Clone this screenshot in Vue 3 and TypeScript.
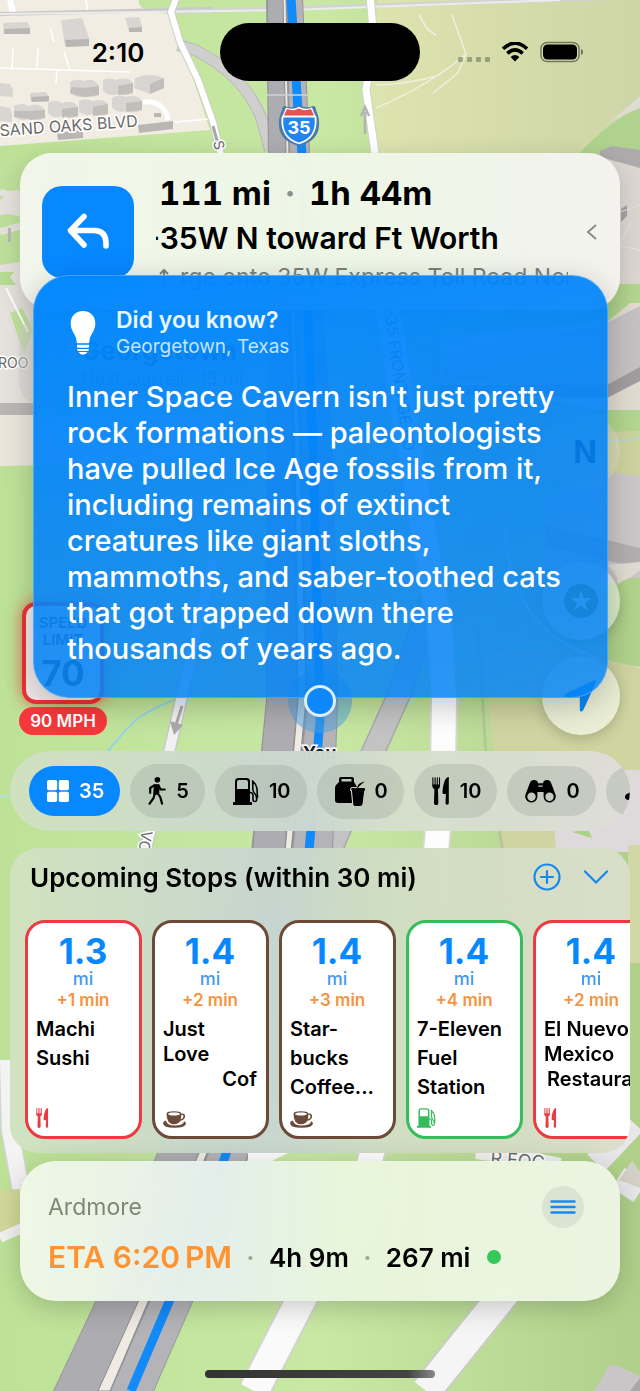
<script setup lang="ts">
interface Chip { icon: string; label: string; count: string; w: number; h: number; active?: boolean }
interface Stop {
  id: number
  dist: string
  detour: string
  lines: string[]
  icon: string
  kind: 'food' | 'coffee' | 'fuel'
  w: number
  h: number
  tight?: 'end' | 'shift'
}

const chips: Chip[] = [
  { icon: 'grid', label: 'All stops', count: '35', w: 22, h: 22, active: true },
  { icon: 'walk', label: 'Rest areas', count: '5', w: 18, h: 28 },
  { icon: 'fuel', label: 'Fuel', count: '10', w: 26, h: 27 },
  { icon: 'takeout', label: 'Takeout', count: '0', w: 30, h: 29 },
  { icon: 'fork', label: 'Restaurants', count: '10', w: 18, h: 28 },
  { icon: 'binoculars', label: 'Sights', count: '0', w: 31, h: 23 },
  { icon: 'bed', label: 'Lodging', count: '4', w: 30, h: 23 },
]

const stops: Stop[] = [
  { id: 1, dist: '1.3', detour: '+1 min', lines: ['Machi', 'Sushi'], icon: 'fork', kind: 'food', w: 13, h: 20 },
  { id: 2, dist: '1.4', detour: '+2 min', lines: ['Just', 'Love', 'Cof'], icon: 'coffee', kind: 'coffee', w: 23, h: 17, tight: 'end' },
  { id: 3, dist: '1.4', detour: '+3 min', lines: ['Star-', 'bucks', 'Coffee...'], icon: 'coffee', kind: 'coffee', w: 23, h: 17 },
  { id: 4, dist: '1.4', detour: '+4 min', lines: ['7-Eleven', 'Fuel', 'Station'], icon: 'fuel', kind: 'fuel', w: 19, h: 20 },
  { id: 5, dist: '1.4', detour: '+2 min', lines: ['El Nuevo', 'Mexico', 'Restaurant'], icon: 'fork', kind: 'food', w: 13, h: 20, tight: 'shift' },
]
</script>

<template>
  <div class="screen">
    <svg class="symbols" aria-hidden="true">
      <symbol id="grid" viewBox="0 0 22 22">
        <rect width="10.2" height="10.2" rx="1.8" /><rect x="11.8" width="10.2" height="10.2" rx="1.8" />
        <rect y="11.8" width="10.2" height="10.2" rx="1.8" /><rect x="11.8" y="11.8" width="10.2" height="10.2" rx="1.8" />
      </symbol>
      <symbol id="walk" viewBox="0 0 18 28">
        <circle cx="9.4" cy="2.8" r="2.8" />
        <path d="M7 8.5h3.4l-.4 8H6.4z" stroke="currentColor" stroke-width="2.4" stroke-linejoin="round" />
        <path d="M6.5 8.2 2.2 11v5M10.5 8.5l2.2 4h4M7 16l-1.4 5-4 5.6M9.6 16l2.8 4.4 1.6 6.2" fill="none" stroke="currentColor" stroke-width="2.2" stroke-linecap="round" stroke-linejoin="round" />
      </symbol>
      <symbol id="fuel" viewBox="0 0 26 27">
        <path fill-rule="evenodd" d="M2 3.500Q2 0 5.500 0h8Q17 0 17 3.500V24h1.200q.8 0 .8.800V27H0v-2.200Q0 24 .8 24H2zM4 4v7h11V4Q15 2 13 2H6Q4 2 4 4z" />
        <path d="M17 14.500q3 0 3 3v4q0 2 1.800 2t1.900-2c0-3-.7-5-2.300-6.500-1.200-1.200-1.600-3-1.600-4.600V3M19.500 3c2.800 2.500 4.600 5 4.600 9.500l.4 7" fill="none" stroke="currentColor" stroke-width="1.600" stroke-linecap="round" />
      </symbol>
      <symbol id="takeout" viewBox="0 0 30 29">
        <path fill-rule="evenodd" d="M4 5V2Q4 0 6 0h11q2 0 2 2v3l3 5h-6l2 16H3q-3 0-3-3V11q0-1.500 1-3zM6.500 4.500h10V2.800Q16.500 2 15.700 2H7.300q-.8 0-.8.800z" />
        <path d="M16.800 11.600h12.400q.8 0 .8.900t-.8.900h-.5L27 27q-.2 1.500-1.500 1.500H20q-1.300 0-1.500-1.500l-1.600-13.600q-.9 0-.9-.9t.8-.9zM22.500 11l1.400-3.600L28.800 5" stroke="currentColor" stroke-width="1" />
        <path d="M15.700 11v2.500h.7l1.400 14" fill="none" stroke="#cbd4ca" stroke-width="1.100" />
      </symbol>
      <symbol id="fork" viewBox="0 0 18 28">
        <path d="M.9.700v8.200q0 2.300 2.100 3L2.600 26q0 1.600 1.600 1.600T5.800 26l-.4-14.100q2.100-.7 2.100-3V.7M3.100.700V9M5.300.700V9" stroke="currentColor" stroke-width="1.100" stroke-linecap="round" fill="none" />
        <path d="M3 10.500h2.400L5.900 26q0 1.600-1.700 1.600T2.500 26zM.5 7.500h7.400q.2 4-3.700 4.400Q.2 11.500.5 7.500z" />
        <path d="M16.800 0v26q0 1.700-1.700 1.700T13.500 26l.4-9h-2.200q-1.300 0-1.200-1.500C10.900 8 12.500 2 15.600.2z" />
      </symbol>
      <symbol id="binoculars" viewBox="0 0 31 23">
        <path fill-rule="evenodd" d="M13.200 3.200h4.600Q18.800 0 22 0q3 0 4.200 3.200l4 10.600A6.100 6.100 0 1 1 18.600 17v-5h-6.200v5A6.100 6.100 0 1 1 .8 13.800L4.800 3.200Q6 0 9 0q3.200 0 4.200 3.200zM6.500 12.500a4.200 4.200 0 1 0 0 8.400 4.200 4.200 0 0 0 0-8.400zm18 0a4.200 4.200 0 1 0 0 8.400 4.200 4.200 0 0 0 0-8.400zM13.300 5.500v1.300h4.400V5.500z" />
      </symbol>
      <symbol id="bed" viewBox="0 0 30 23"><path d="M1 17Q1 14 5 13l6-3h15q4 0 4 5v5H5q-4 0-4-3z" /></symbol>
      <symbol id="coffee" viewBox="0 0 23 17">
        <path fill-rule="evenodd" d="M3.500 2.500Q4 .3 11 .3t7.300 2.200h1.200q2.800.3 2.600 3-.3 3.500-4.700 4.300-1.700 3.400-6.400 3.400Q3.500 13.200 3.500 2.500zM11 1.500C7 1.500 5 2.200 5 3s2 1.600 6 1.600S17 3.800 17 3s-2-1.500-6-1.500zm7.300 2.300q0 2.500-.5 4.500 2.500-.6 2.700-2.800.1-1.600-1.400-1.700z" />
        <path d="M2.800 9.500Q0 10.300 0 12.200q.3 4.500 11.500 4.600Q22.700 16.700 23 12.500q0-1.400-1.800-2.200-1 4.300-10 4.300-6.800 0-8.400-5.100z" />
      </symbol>
    </svg>

    <svg class="map" viewBox="0 0 640 1391" preserveAspectRatio="xMidYMid slice" aria-hidden="true">
      <defs>
        <linearGradient id="grass" x1="0" y1="0" x2="1" y2="0">
          <stop offset="0" stop-color="#bde297" /><stop offset=".5" stop-color="#c8e8a4" /><stop offset="1" stop-color="#b0d08a" />
        </linearGradient>
        <linearGradient id="field" x1="0" y1="0" x2="1" y2="0">
          <stop offset="0" stop-color="#dde4ae" /><stop offset="1" stop-color="#ced5a7" />
        </linearGradient>
      </defs>
      <rect width="640" height="1391" fill="url(#grass)" />
      <path d="M378 0H640V153H372L366 90z" fill="url(#field)" />
      <path d="M580 153Q610 120 640 108V153z" fill="#afd38f" /><path d="M602 128Q622 112 640 96V108Q616 117 602 128z" fill="#dedad4" />
      <path d="M0 0H139Q136 12 172 14L210 130 0 146z" fill="#f1ede3" />
      <path d="M0 160 40 175V470L0 465z" fill="#e5e1dc" />
      <path d="M0 160 30 160V195Q10 190 0 200zM0 215 20 213V262L0 265zM0 215 14 218 20 240 0 243zM10 313 22 308 33 330 24 354z" fill="#bfe19c" />
      <path d="M0 192Q14 197 20 192M0 208 20 213M0 232 20 226" stroke="#e6e3de" stroke-width="7" fill="none" /><path d="M8 228h3v14H8z" fill="#bab7b4" />
      <path d="M0 272h14l-4 5 6 8H0z" fill="#b8dd93" />
      <path d="M6 288 28 332" stroke="#fff" stroke-width="2" />
      <path d="M0 403H36V415H0z" fill="#b9b7b6" /><path d="M0 415H220V462L0 466z" fill="#eae6dc" /><path d="M0 466 220 462V490H0z" fill="#bde297" />

      <!-- buildings and lots -->
      <g stroke="#fff" stroke-width="1.500" fill="none">
        <path d="M13 48 12 70M38 48 37 70M50 28 54 42M64 52 70 70M86 0 88 12M57 70 56 84M0 68 130 72M174 122 210 119" />
        <path d="M10 0 14 16" stroke-width="6" /><path d="M143 102Q164 100 168 120" stroke-width="5" />
      </g>
      <path d="M0 14 213 9" stroke="#c9c9cb" stroke-width="4" /><path d="M170 12 640 -3" stroke="#d2d3d4" stroke-width="4" /><path d="M0 14 290 10 560 0" stroke="#ececed" stroke-width="2" fill="none" />
      <g fill="#d9d5d2">
        <path d="M3 23 28 22 30 28V34H4zM61 20 82 18 89 38V46H65zM125 18 139 17 142 26V32L129 31z" />
        <path d="M30 93 46 92 49 97V102H31z" />
        <path d="M70 82Q76 78 84 81 94 77 99 86V95Q92 98 84 97 76 98 70 93z" />
        <path d="M103 80Q108 77 117 80 127 76 133 83V93Q126 97 118 94 110 97 103 91zM135 78Q150 72 164 78V88L150 94 134 88zM112 98Q118 94 126 97 137 93 142 101V110Q134 114 126 111 118 114 112 107zM79 101Q86 98 93 101 103 98 108 104V114Q100 117 93 114 86 117 79 112zM48 103Q55 99 62 103 73 99 78 107V116Q72 120 62 116 54 120 48 113zM14 106Q22 102 29 106 39 102 45 110V118Q37 122 29 119 20 122 14 116zM0 83 10 84 13 90V97L0 96zM0 106 10 108 12 114V122L0 121z" />
      </g>
      <g fill="#b9b6b4">
        <path d="M4 29 30 28V34H4zM65 40 89 39V46L66 47zM129 28 142 27V32L129 32zM31 97 49 96V101L32 102zM138 125 173 121V129L139 133zM57 133 83 130V138L58 140zM154 113h7v4h-7z" />
        <path d="M84 88 99 86V95L84 97zM118 86 133 83V93L118 95zM150 84 164 78V88L150 94zM126 103 142 101V110L126 112zM93 107 108 104V114L93 116zM62 109 78 107V116L62 118zM29 111 45 110V118L29 120zM72 87 84 88V97L70 93zM14 111 29 111V119L14 117z" opacity=".75" />
      </g>
      <path d="M178 45 195 50Q245 75 262 120L270 150" stroke="#b8b9b9" stroke-width="12" fill="none" /><path d="M178 45 195 50Q245 75 262 120L270 150" stroke="#cfd0ce" stroke-width="10" fill="none" />
      <path d="M177 -4 171 12 180 42 198 80 213 122 221 155" stroke="#cdd0cb" stroke-width="8" fill="none" /><path d="M177 -4 171 12 180 42 198 80 213 122 221 155" stroke="#fff" stroke-width="6" fill="none" />
      <path d="M213 126 218 144" stroke="#a7a7a7" stroke-width="3" />

      <!-- right side -->
      <path d="M600 151 612 146 640 150V185H600z" fill="#aeabad" /><path d="M604 158 640 168V284H604z" fill="#dcd7d1" />
      <path d="M621 209 627 205V216L621 222z" fill="#a6a3a5" /><path d="M620 212 640 205M620 246 640 250M620 242 632 222" stroke="#e8e4df" fill="none" />
      <path d="M430 340 604 284H640V480L430 470z" fill="#b2d58f" />
      <path d="M440 335 607 322 630 303 640 303V410L600 410 440 380z" fill="#e0dacf" />
      <path d="M450 355 607 323 640 306V374L607 390 440 380z" fill="#c5c1c2" /><path d="M440 385 607 385 640 367V381L607 398 440 394z" fill="#a09d9f" />
      <path d="M490 460Q580 430 640 431V480H470z" fill="#ccd39e" /><path d="M600 441Q620 442 640 438" stroke="#acd6dc" stroke-width="1.500" fill="none" />
      <path d="M545 500 607 472 640 476V580L607 585 545 575z" fill="#cbc7c9" /><path d="M545 525 640 548V568L545 546z" fill="#b3afb1" />
      <path d="M607 565Q625 580 612 592L640 570V562z" fill="#e0dbd2" /><path d="M612 590Q625 575 640 578V668Q560 655 520 600L505 560z" fill="#b0d28c" />
      <path d="M505 530Q510 650 640 668" stroke="#e1e6d7" stroke-width="2" fill="none" />
      <path d="M484 655Q560 645 640 668V775L550 782 494 760z" fill="#cfd4a1" />
      <path d="M494 740 640 725V852H500z" fill="#cfd4a0" /><path d="M550 770H640V852H556z" fill="#dedadb" /><path d="M572 832 588 829 592 838z" fill="#abd185" />
      <path d="M628 845H640V963H628z" fill="#d2d8a5" />

      <!-- local roads -->
      <g fill="none">
        <path d="M375 153 366 90 374 40 370 -4" stroke="#d1d4cc" stroke-width="9" /><path d="M375 153 366 90 374 40 370 -4" stroke="#fff" stroke-width="7" />
        <path d="M365 134V112M361 116 365 107 369 116" stroke="#b3b4b1" stroke-width="2.500" />
        <path d="M419 15 428 30 436 35M452 15 466 54 458 73 433 93M466 54Q430 85 376 108M440 75Q410 84 376 85" stroke="#eef0de" stroke-width="1.500" />
        <path d="M107 752Q125 730 138 718 160 704 180 698L240 650" stroke="#97d4e6" stroke-width="2" />
        <path d="M0 797 14 794" stroke="#b1e1dc" stroke-width="2" />
        <path d="M213 560 181 700 165 770 145 852" stroke="#c7c9c5" stroke-width="13" /><path d="M213 560 181 700 165 770 145 852" stroke="#f1f1f1" stroke-width="10" />
        <path d="M182 706 176 725" stroke="#aaa" stroke-width="3" /><path d="M170 721 174 735 183 725z" fill="#aaa" />
        <path d="M438 580 401 690 365 770 330 852" stroke="#a9aaab" stroke-width="24" /><path d="M438 580 401 690 365 770 330 852" stroke="#c3c3c4" stroke-width="21" />
        <path d="M383 280 405 420 440 630 444 700 443 770 436 852V900L350 1240" stroke="#d4d7cf" stroke-width="28" /><path d="M383 280 405 420 440 630 444 700 443 770 436 852V900L350 1240" stroke="#fdfdfd" stroke-width="24" />
        <path d="M478 630 486 755 503 852" stroke="#b4c799" stroke-width="3" />
      </g>

      <!-- interstate -->
      <path d="M266 -2H303L310 153 333 450 338 700 333 852 250 1153 193 1302 154 1391H53L95 1302 157 1153 251 852 266 700 268 153z" fill="#97979b" />
      <path d="M268 -2H283L286 153 292 450 297 700 284 852 198 1153 138 1302 98 1391H54L96 1302 158 1153 253 852 267 700 269 153z" fill="#acacb1" />
      <path d="M283 -2H286L289 153 300 450 306 700 291 852 207 1153 148 1302 110 1391H98L138 1302 199 1153 285 852 298 700 295 450 286 153z" fill="#efebe2" stroke="#8d8d91" stroke-width="1" />
      <path d="M288 -2H302L309 153 332 450 337 700 332 852 248 1153 192 1302 153 1391H111L150 1302 209 1153 293 852 308 700 302 450 290 153z" fill="#b4b4b8" />
      <path d="M291 -2 298 110 302 153 313 450 320 720 309 852 225 1157 169 1302 131 1391" stroke="#138af9" stroke-width="9" fill="none" stroke-linejoin="round" />
      <path d="M267 95H308" stroke="#d2d2d3" stroke-width="1.500" />
      <circle cx="320" cy="701" r="32" fill="#4d9fe0" opacity=".5" />

      <!-- lower map -->
      <g fill="none">
        <path d="M8 1060 10 1130 30 1240" stroke="#d4d5d3" stroke-width="19" /><path d="M8 1060 10 1130 30 1240" stroke="#f3f3f3" stroke-width="16" />
        <path d="M0 1190 20 1189V1228L0 1234z" fill="#d3d99b" /><path d="M0 1238 26 1226" stroke="#f3f3f3" stroke-width="10" />
        <path d="M248 1163V1152H290L268 1163z" fill="#fbfbfb" />
        <path d="M306 1290 254 1391" stroke="#d0d4cb" stroke-width="33" /><path d="M306 1290 254 1391" stroke="#fafafa" stroke-width="29" />
        <path d="M512 1284 426 1391" stroke="#c9cec2" stroke-width="33" /><path d="M512 1284 426 1391" stroke="#f6f5f6" stroke-width="29" />
        <path d="M476 1152Q540 1160 560 1165" stroke="#f1f1f1" stroke-width="14" />
        <path d="M596 1163 634 1123M618 1178 640 1192" stroke="#e8e7e9" stroke-width="24" /><path d="M632 1161 619 1180 640 1188V1172z" fill="#d5d1c7" />
      </g>
      <path d="M609 1366Q613 1362 620 1367L640 1376V1391H594z" fill="#c8c6c6" /><path d="M640 1378 630 1391H640z" fill="#aaa7a7" />

      <g class="labels">
        <text transform="translate(-12 137) rotate(-4)" font-size="16">USAND OAKS BLVD</text>
        <text transform="translate(213 142) rotate(75)" font-size="14">S</text>
        <text x="-2" y="368" font-size="14">ROO</text>
        <text transform="translate(384 310) rotate(82)" font-size="16">-35 FRONTAGE RD</text>
        <text transform="translate(142 830) rotate(100)" font-size="15">VO</text>
        <text transform="translate(490 1164) rotate(5)" font-size="18">R EOG</text>
        <text x="303" y="759" font-size="18" class="you">You</text>
      </g>

      <g transform="translate(279 105)">
        <path d="M6 1Q13 4 20 0q7 4 14 1 3 0 3 4 4 9 3 16-1 15-20 20Q1 36 0 21-1 14 3 5 3 1 6 1z" fill="#4d7ba9" />
        <path d="M7 2.500Q14 5.500 20 1.800q6 3.700 13 .7 2 6 4.500 10Q39 34 20 39.200 1 34 2.500 12.500 5 8 7 2.500z" fill="#fff" />
        <path d="M8 4Q14 6.500 20 3.500q6 3 12 .5l3 6.500H5z" fill="#e9504f" />
        <path d="M4.500 12.500h31Q38 32 20 37.500 2 32 4.500 12.500z" fill="#2484f0" />
        <text x="20" y="28.500" text-anchor="middle" font-size="18" class="route-no">35</text>
      </g>
    </svg>

    <header class="status">
      <time class="clock">2:10</time>
      <span class="island"></span>
      <span class="signals">
        <span class="dots"><i></i><i></i><i></i><i></i></span>
        <svg width="26" height="20" viewBox="0 0 26 20" aria-label="Wi-Fi">
          <path d="M1 6.800Q13-4.500 25 6.800M5.300 11.400Q13 4.500 20.700 11.400" fill="none" stroke="#000" stroke-width="3.600" />
          <path d="M8.600 15Q13 11 17.400 15L13 19.600z" />
        </svg>
        <svg width="44" height="22" viewBox="0 0 44 22" aria-label="Battery">
          <rect x="1" y="1.500" width="38" height="19" rx="6" fill="none" stroke="#000" stroke-opacity=".45" stroke-width="1.500" />
          <rect x="3" y="3.500" width="34" height="15" rx="4.500" /><path d="M41 8Q43 8.500 43 11t-2 3z" opacity=".5" />
        </svg>
      </span>
    </header>

    <main class="guidance">
      <section class="turn">
        <div class="turn-icon">
          <svg width="44" height="38" viewBox="0 0 44 38" aria-label="Turn left"><path d="M18 3.500 4.500 17.500 18 32M5.500 17.500H28Q40 17.500 40 30.500V33" fill="none" stroke="#fff" stroke-width="5.600" stroke-linecap="round" stroke-linejoin="round" /></svg>
        </div>
        <div class="turn-text">
          <p class="turn-dist">111 mi<span class="sep">·</span>1h 44m</p>
          <p class="turn-road"><span>-35W N toward Ft Worth</span></p>
          <p class="turn-next"><svg width="12" height="20" viewBox="0 0 12 20"><path d="M6 19V4M2 7l4-4 4 4" fill="none" stroke="#7c8177" stroke-width="2" /></svg><span>rge onto 35W Express Toll Road North</span></p>
        </div>
        <button class="collapse" aria-label="Collapse directions"><svg width="12" height="18" viewBox="0 0 12 18"><path d="M10 2 2 9l8 7" fill="none" stroke="#858585" stroke-width="1.800" /></svg></button>
      </section>

      <div class="map-zone">
        <div class="left-rail">
          <div class="place"><b>Georgetown</b><span>Next: Jarrell · 13 mi</span></div>
          <div class="speed">
            <div class="limit"><small>SPEED<br>LIMIT</small><strong>70</strong></div>
            <div class="mph">90 MPH</div>
          </div>
        </div>
        <div class="right-rail">
          <button class="round compass" aria-label="Compass">N</button>
          <button class="round" aria-label="Favorites">
            <svg width="36" height="36" viewBox="0 0 36 36"><circle cx="18" cy="18" r="17" fill="#72882e" /><path d="m18 7.500 2.600 7.400 7.900.2-6.300 4.700 2.300 7.500-6.500-4.500-6.500 4.500 2.300-7.500-6.300-4.700 7.900-.2z" fill="#f0f4dd" /></svg>
          </button>
          <button class="round" aria-label="My location">
            <svg width="34" height="34" viewBox="0 0 34 34"><path d="M1.500 14.800 30 1.300q2.800-.9 2 2L19.200 31.200q-1.200 2-2.700 1-.7-.5-.7-1.500V18.500H3Q.5 18 .3 16.500q0-1 1.200-1.700z" fill="#0788ff" /></svg>
          </button>
        </div>
      </div>

      <article class="tip">
        <header class="tip-head">
          <svg width="26" height="44" viewBox="0 0 26 44"><path d="M13 0C5 0 .7 5.600.7 12.500c0 8.500 5.700 10.500 5.900 18 .1 1.500.6 1.800 1.700 1.800h9.400c1.100 0 1.600-.3 1.700-1.800.2-7.500 5.900-9.500 5.900-18C25.300 5.600 21 0 13 0zM7 33.800h12v1.900q0 1-1 1H8q-1 0-1-1zM7 38h12q0 2-2 2H9q-2 0-2-2zM8.500 41h9q-1.500 2.800-4.500 2.800T8.500 41z" fill="#fff" /></svg>
          <div><h2>Did you know?</h2><p>Georgetown, Texas</p></div>
        </header>
        <p class="tip-body">Inner Space Cavern isn't just pretty<br>rock formations — paleontologists<br>have pulled Ice Age fossils from it,<br>including remains of extinct<br>creatures like giant sloths,<br>mammoths, and saber-toothed cats<br>that got trapped down there<br>thousands of years ago.</p>
      </article>
      <span class="puck"></span>
    </main>

    <nav class="chips" aria-label="Stop categories">
      <button v-for="c in chips" :key="c.icon" class="chip" :class="{ active: c.active }" :aria-label="c.label">
        <svg :width="c.w" :height="c.h"><use :href="'#' + c.icon" /></svg><span>{{ c.count }}</span>
      </button>
    </nav>

    <section class="stops">
      <header class="stops-head">
        <h2>Upcoming Stops (within 30 mi)</h2>
        <button aria-label="Add stop"><svg width="28" height="28" viewBox="0 0 28 28"><circle cx="14" cy="14" r="12.500" /><path d="M14 8v12M8 14h12" /></svg></button>
        <button aria-label="Collapse stops"><svg width="26" height="16" viewBox="0 0 26 16"><path d="m2 2.500 11 11 11-11" /></svg></button>
      </header>
      <div class="cards">
        <article v-for="s in stops" :key="s.id" class="card" :class="[s.kind, s.tight && 'tight', s.tight]">
          <strong>{{ s.dist }}</strong>
          <span class="unit">mi</span>
          <span class="detour">{{ s.detour }}</span>
          <div class="name"><span v-for="l in s.lines" :key="l">{{ l }}</span></div>
          <svg class="card-icon" :width="s.w" :height="s.h"><use :href="'#' + s.icon" /></svg>
        </article>
      </div>
    </section>

    <footer class="trip">
      <div class="trip-top">
        <span>Ardmore</span>
        <button aria-label="Trip menu"><svg width="26" height="16" viewBox="0 0 26 16"><path d="M1.500 2.500h23M1.500 8h23M1.500 13.500h23" fill="none" stroke="#188aef" stroke-width="2.400" stroke-linecap="round" /></svg></button>
      </div>
      <div class="trip-row">
        <b>ETA 6:20&#8201;PM</b><i>·</i><span>4h 9m</span><i>·</i><span>267 mi</span><em></em>
      </div>
    </footer>
    <div class="home"><span></span></div>
  </div>
</template>

<style>
body { margin: 0; }
</style>

<style scoped>
* { box-sizing: border-box; }
.screen { position: relative; min-height: 100vh; display: flex; flex-direction: column; overflow: hidden; font-family: Inter, "Liberation Sans", sans-serif; color: #000; background: #bfe19c; }
.screen > * { position: relative; }
h2, p { margin: 0; }
button { border: 0; padding: 0; background: none; font: inherit; color: inherit; display: flex; align-items: center; justify-content: center; flex: none; }
svg { display: block; flex: none; }
.screen > .symbols { position: absolute; width: 0; height: 0; }
.screen > .map { position: absolute; inset: 0; width: 100%; height: 100%; }
.labels text { fill: #6b6b6b; stroke: #fff; stroke-width: 3; paint-order: stroke; font-weight: 400; }
.labels .you { fill: #222; font-weight: 700; }
.route-no { fill: #fff; font-weight: 700; }

.status { display: grid; grid-template-columns: 1fr 200px 1fr; align-items: center; height: 104px; margin-bottom: 49px; }
.clock { text-align: center; padding-left: 16px; font-size: 26px; font-weight: 600; }
.island { height: 58px; border-radius: 29px; background: #000; }
.signals { display: flex; align-items: center; gap: 12px; padding-left: 38px; }
.dots { display: flex; gap: 4px; padding-top: 14px; }
.dots i { width: 5px; height: 5px; border-radius: 1px; background: rgba(70, 75, 50, .42); }

.guidance { flex: 1; display: flex; flex-direction: column; }
.turn { display: flex; align-items: center; margin: 0 20px; padding: 18px 22px 17px; border-radius: 32px; background: linear-gradient(90deg, rgba(243, 246, 236, .98), rgba(238, 247, 230, .98) 50%, rgba(245, 243, 240, .98)); box-shadow: 0 6px 24px rgba(0, 0, 0, .16); }
.turn-icon { width: 92px; height: 92px; border-radius: 20px; background: #0788ff; display: flex; align-items: center; justify-content: center; }
.turn-text { flex: 1; min-width: 0; margin-left: 22px; white-space: nowrap; overflow: hidden; }
.turn-dist { line-height: 44px; padding-left: 3px; font-size: 33px; font-weight: 700; font-variant-numeric: tabular-nums; }
.sep { display: inline-block; width: 38px; text-align: center; color: #8b8f86; }
.turn-road { line-height: 46px; font-size: 30px; font-weight: 600; overflow: hidden; }
.turn-road span { margin-left: -10px; }
.turn-next { display: flex; align-items: center; gap: 10px; line-height: 32px; font-size: 23px; color: #7c8177; padding-left: 2px; margin-right: 12px; overflow: hidden; }
.collapse { width: 24px; height: 44px; margin-right: -6px; }

.map-zone { flex: 1; min-height: 441px; display: flex; justify-content: space-between; padding: 8px 20px 16px 19px; }
.left-rail, .right-rail { display: flex; flex-direction: column; justify-content: space-between; }
.place { width: 250px; height: 85px; padding: 16px 0 0 62px; border-radius: 20px; background: rgba(210, 210, 206, .5); }
.place b { display: block; font-size: 26px; line-height: 34px; opacity: .7; }
.place span { font-size: 18px; opacity: .4; white-space: nowrap; }
.speed { width: 88px; display: flex; flex-direction: column; align-items: center; gap: 3px; }
.limit { width: 82px; height: 102px; padding-top: 8px; border: 4px solid #e93338; border-radius: 14px; background: #f1e9e9; text-align: center; box-shadow: 0 0 16px rgba(240, 40, 40, .6); }
.limit small { display: block; font-size: 15px; line-height: 17px; font-weight: 600; opacity: .7; }
.limit strong { display: block; margin-top: 6px; font-size: 35px; line-height: 38px; opacity: .8; }
.mph { width: 88px; line-height: 28px; border-radius: 14px; background: #f6383c; color: #fff; font-size: 17px; font-weight: 600; text-align: center; white-space: nowrap; }
.right-rail { justify-content: flex-end; align-items: flex-end; gap: 17px; }
.round { width: 78px; height: 78px; border-radius: 50%; background: rgba(238, 241, 220, .88); box-shadow: 0 4px 14px rgba(0, 0, 0, .18); }
.round:nth-child(2) { background: rgba(230, 240, 220, .75); }
.round.compass { margin-bottom: 55px; padding-left: 8px; background: rgba(221, 224, 198, .5); box-shadow: none; font-size: 31px; font-weight: 700; }

.tip { position: absolute; top: 122px; left: 33px; right: 32px; padding: 30px 33px 30px; border-radius: 36px; border: 1px solid rgba(120, 195, 255, .5); background: linear-gradient(165deg, rgba(0, 134, 255, .98), rgba(4, 132, 248, .91) 45%, rgba(8, 132, 242, .85)); box-shadow: 0 8px 30px rgba(0, 0, 0, .22); color: #fff; }
.tip-head { display: flex; align-items: center; gap: 20px; margin-left: 3px; }
.tip-head h2 { font-size: 23px; line-height: 28px; font-weight: 600; color: #e8f6ff; }
.tip-head p { font-size: 19px; line-height: 26px; color: #c3e4ff; }
.tip-body { margin-top: 19px; font-size: 29px; line-height: 36px; font-weight: 500; white-space: nowrap; }
.puck { position: absolute; left: 50%; bottom: 34px; width: 32px; height: 32px; margin-left: -16px; border: 3px solid #dceeff; border-radius: 50%; background: #0d87fa; }

.chips { display: flex; align-items: center; gap: 10px; height: 80px; margin: 0 10px; padding: 0 19px; border-radius: 40px; overflow: hidden; background: linear-gradient(90deg, rgba(207, 225, 192, .96), rgba(203, 215, 209, .96) 46%, rgba(213, 223, 203, .96) 62%, rgba(222, 220, 216, .96)); backdrop-filter: blur(24px); }
.chip { gap: 10px; padding: 13px 16px 13px 18px; border-radius: 999px; background: rgba(150, 160, 150, .3); font-size: 20px; line-height: 24px; font-weight: 600; }
.chip svg, .card-icon { fill: currentColor; }
.chip.active { background: #0788ff; color: #fff; }

.stops { margin: 17px 10px 0; padding-bottom: 14px; border-radius: 28px; overflow: hidden; background: linear-gradient(90deg, rgba(208, 226, 192, .96), rgba(200, 214, 208, .96) 42%, rgba(208, 221, 193, .96) 62%, rgba(219, 222, 203, .96)); backdrop-filter: blur(24px); }
.stops-head { display: flex; align-items: center; height: 72px; padding: 0 21px 14px 20px; gap: 22px; }
.stops-head h2 { flex: 1; font-size: 26px; font-weight: 600; white-space: nowrap; }
.stops-head svg { fill: none; stroke: #1688ef; stroke-width: 2.2; stroke-linecap: round; }
.cards { display: flex; gap: 10px; padding-left: 15px; overflow: hidden; }
.card { flex: none; width: 117px; height: 219px; display: flex; flex-direction: column; padding: 11px 9px 8px 8px; border: 3px solid; border-radius: 20px; background: #fff; }
.food { border-color: #e93b40; color: #e93b40; }
.coffee { border-color: #6b4b38; color: #6b4b38; }
.fuel { border-color: #35bd5b; color: #35bd5b; }
.card strong { font-size: 35px; line-height: 34px; color: #0788ff; text-align: center; }
.unit { font-size: 18px; line-height: 22px; color: #3f9bf3; text-align: center; font-weight: 500; }
.detour { font-size: 17px; line-height: 20px; color: #f79340; text-align: center; font-weight: 600; }
.name { flex: 1; display: flex; flex-direction: column; margin-top: 5px; color: #000; font-size: 20px; line-height: 29px; font-weight: 600; white-space: nowrap; }
.tight .name { line-height: 25px; margin-top: 7px; }
.end .name span:last-child { text-align: right; }
.shift .name span:last-child { padding-left: 3px; }

.trip { margin: 8px 20px 0; padding: 25px 36px 18px 28px; border-radius: 36px; background: linear-gradient(90deg, rgba(240, 248, 231, .96), rgba(230, 240, 236, .96) 33%, rgba(233, 246, 220, .96) 56%, rgba(237, 245, 228, .96)); backdrop-filter: blur(24px); box-shadow: 0 6px 28px rgba(0, 0, 0, .2); }
.trip-top { display: flex; justify-content: space-between; align-items: center; font-size: 23px; color: #7d8973; }
.trip-top button { width: 42px; height: 42px; border-radius: 50%; background: rgba(160, 170, 160, .22); }
.trip-row { display: flex; align-items: center; height: 52px; margin-top: 3px; font-size: 26px; font-weight: 600; white-space: nowrap; }
.trip-row b { font-size: 30px; font-weight: 600; color: #ff9330; }
.trip-row i { width: 37px; text-align: center; font-style: normal; color: #9aab8d; }
.trip-row em { width: 14px; height: 14px; margin-left: 17px; border-radius: 50%; background: #35c75a; }
.home { display: flex; justify-content: center; align-items: flex-end; height: 90px; padding-bottom: 13px; }
.home span { width: 36%; height: 8px; border-radius: 4px; background: linear-gradient(90deg, #333, #424440 88%, #888); }
</style>
